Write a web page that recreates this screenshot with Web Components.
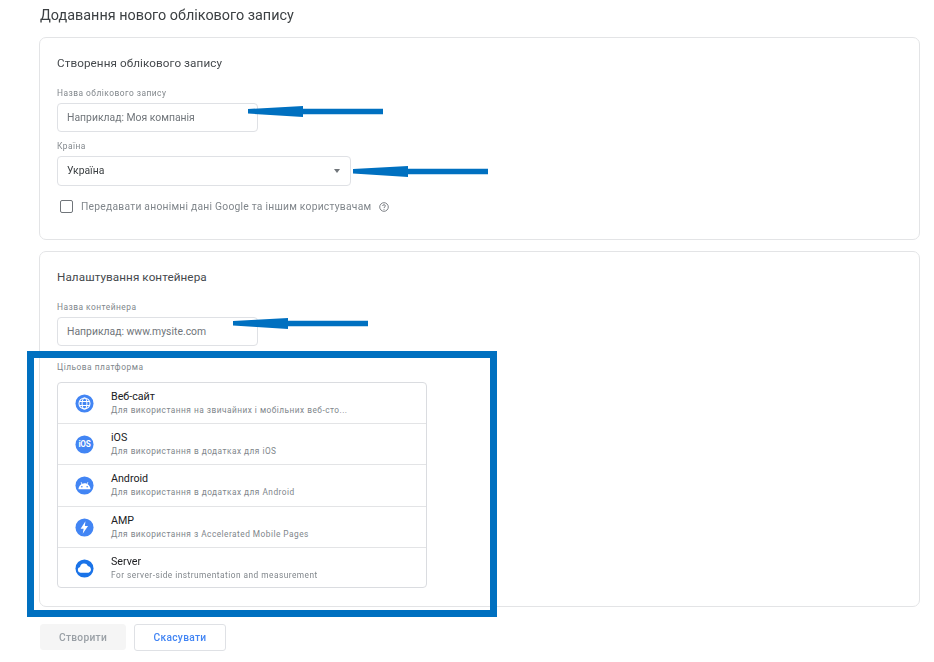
<!DOCTYPE html>
<html lang="uk">
<head>
<meta charset="utf-8">
<title>Додавання нового облікового запису</title>
<style>
html, body { margin: 0; padding: 0; background: #fff; }
body { font-family: Roboto, "Liberation Sans", sans-serif; color: #202124; }
</style>
</head>
<body>
<setup-page>
  <setup-card heading="Створення облікового запису" style="height:203px">
    <text-field label="Назва облікового запису" placeholder="Наприклад: Моя компанія"></text-field>
    <select-field label="Країна" value="Україна"></select-field>
    <share-check>Передавати анонімні дані Google та іншим користувачам</share-check>
  </setup-card>
  <setup-card heading="Налаштування контейнера" style="height:356px">
    <text-field label="Назва контейнера" placeholder="Наприклад: www.mysite.com"></text-field>
    <platform-list label="Цільова платформа">
      <platform-row icon="web" name="Веб-сайт" hint="Для використання на звичайних і мобільних веб-сто..."></platform-row>
      <platform-row icon="ios" name="iOS" hint="Для використання в додатках для iOS"></platform-row>
      <platform-row icon="android" name="Android" hint="Для використання в додатках для Android"></platform-row>
      <platform-row icon="amp" name="AMP" hint="Для використання з Accelerated Mobile Pages"></platform-row>
      <platform-row icon="server" name="Server" hint="For server-side instrumentation and measurement"></platform-row>
    </platform-list>
  </setup-card>
  <div slot="actions" style="display:flex;align-items:flex-start;gap:8px">
    <action-button disabled>Створити</action-button>
    <action-button>Скасувати</action-button>
  </div>
</setup-page>

<script>
const ICONS = {
  web: `<circle cx="10" cy="10" r="9.5" fill="#4285f4"/>
    <g fill="none" stroke="#fff" stroke-width="1.1">
      <circle cx="10" cy="10" r="5.8"/>
      <ellipse cx="10" cy="10" rx="2.5" ry="5.8"/>
      <path d="M4.6 8h10.8M4.6 12h10.8"/>
    </g>`,
  ios: `<circle cx="10" cy="10" r="9.5" fill="#4285f4"/>
    <text x="10" y="13" text-anchor="middle" font-family="Roboto, sans-serif" font-size="8.6" font-weight="700" fill="#fff" letter-spacing="-.2">iOS</text>`,
  android: `<circle cx="10" cy="10" r="9.5" fill="#4285f4"/>
    <path fill="#fff" d="M3.6 14c.2-2.5 1.4-4.5 3.3-5.6L5.9 6.7l.7-.4 1.05 1.8A6.4 6.4 0 0 1 10 7.7c.84 0 1.63.14 2.35.4l1.05-1.8.7.4-1 1.7c1.9 1.1 3.1 3.1 3.3 5.6z"/>
    <circle cx="7.2" cy="11.3" r=".85" fill="#4285f4"/><circle cx="12.8" cy="11.3" r=".85" fill="#4285f4"/>`,
  amp: `<circle cx="10" cy="10" r="9.5" fill="#4285f4"/>
    <path fill="#fff" d="M11 3.4 5.9 11.2h3.2l-1 5.4 5.6-8.2h-3.3z"/>`,
  server: `<circle cx="10" cy="10" r="9.5" fill="#1a73e8"/>
    <path fill="#fff" d="M5.8 14.4a3.1 3.1 0 0 1-.5-6.1 4.4 4.4 0 0 1 8.3-.9 3.6 3.6 0 0 1 .7 7z"/>`
};

class SetupPage extends HTMLElement {
  constructor() {
    super();
    this.attachShadow({ mode: 'open' }).innerHTML = `
    <style>
      :host { display: block; position: relative; width: 934px; height: 662px; box-sizing: border-box; padding: 0 14px 0 39px; overflow: hidden; filter: blur(.35px); }
      h1 { margin: 0; padding: 6px 0 0 1px; height: 37px; box-sizing: border-box; font-size: 14.4px; line-height: 19px; font-weight: 400; color: #3c4043; }
      .cards { display: flex; flex-direction: column; gap: 11px; }
      .actions { padding: 17px 0 0 1px; }
      annotation-arrow.a1 { left: 248px; top: 106px; }
      annotation-arrow.a2 { left: 353px; top: 166px; }
      annotation-arrow.a3 { left: 233px; top: 318px; }
      annotation-frame { left: 27px; top: 351px; }
    </style>
    <h1>Додавання нового облікового запису</h1>
    <div class="cards"><slot></slot></div>
    <div class="actions"><slot name="actions"></slot></div>
    <annotation-arrow class="a1"></annotation-arrow>
    <annotation-arrow class="a2"></annotation-arrow>
    <annotation-arrow class="a3"></annotation-arrow>
    <annotation-frame></annotation-frame>`;
  }
}

class SetupCard extends HTMLElement {
  constructor() {
    super();
    this.attachShadow({ mode: 'open' });
  }
  connectedCallback() {
    this.shadowRoot.innerHTML = `
    <style>
      :host { display: block; box-sizing: border-box; border: 1px solid #e3e4e6; border-radius: 7px; padding: 17px 17px 0; background: #fff; }
      h2 { margin: 0 0 17px; font-size: 11.7px; line-height: 16px; font-weight: 400; color: #45494d; letter-spacing: .08px; }
    </style>
    <h2>${this.getAttribute('heading')}</h2>
    <slot></slot>`;
  }
}

const FIELD_CSS = `
  .label { font-size: 8.4px; line-height: 11px; letter-spacing: .48px; color: #80868b; margin-bottom: 4px; }
  .box { box-sizing: border-box; border: 1px solid #dfe1e5; border-radius: 4px; background: #fff; display: flex; align-items: center; padding: 0 9px; font-size: 10.4px; }
`;

class TextField extends HTMLElement {
  constructor() {
    super();
    this.attachShadow({ mode: 'open' });
  }
  connectedCallback() {
    this.shadowRoot.innerHTML = `
    <style>
      :host { display: block; margin-bottom: 9px; }
      ${FIELD_CSS}
      .box { width: 201px; height: 29px; color: #70757a; }
    </style>
    <div class="label">${this.getAttribute('label')}</div>
    <div class="box">${this.getAttribute('placeholder')}</div>`;
  }
}

class SelectField extends HTMLElement {
  constructor() {
    super();
    this.attachShadow({ mode: 'open' });
  }
  connectedCallback() {
    this.shadowRoot.innerHTML = `
    <style>
      :host { display: block; }
      ${FIELD_CSS}
      .box { width: 294px; height: 30px; color: #3c4043; justify-content: space-between; }
      .box span:first-child { margin-top: -1px; }
      .caret { width: 0; height: 0; border: 3.5px solid transparent; border-top: 4px solid #70757a; border-bottom: 0; margin-right: 1px; }
    </style>
    <div class="label">${this.getAttribute('label')}</div>
    <div class="box"><span>${this.getAttribute('value')}</span><span class="caret"></span></div>`;
  }
}

class ShareCheck extends HTMLElement {
  constructor() {
    super();
    this.attachShadow({ mode: 'open' }).innerHTML = `
    <style>
      :host { display: flex; align-items: center; padding: 14px 0 0 3px; font-size: 10.3px; letter-spacing: .24px; color: #80868b; }
      .box { box-sizing: border-box; width: 13px; height: 13px; border: 1.2px solid #70757a; border-radius: 2px; margin-right: 8px; }
      svg { margin-left: 8px; }
    </style>
    <span class="box"></span><slot></slot>
    <svg width="10" height="10" viewBox="0 0 10 10" fill="none">
      <circle cx="5" cy="5" r="4.3" stroke="#70757a" stroke-width=".9"/>
      <path d="M3.6 4c.1-.9.7-1.3 1.4-1.3.8 0 1.4.5 1.4 1.2 0 1-1.4 1-1.4 2.1" stroke="#70757a" stroke-width=".9"/>
      <circle cx="5" cy="7.3" r=".55" fill="#70757a"/>
    </svg>`;
  }
}

class PlatformList extends HTMLElement {
  constructor() {
    super();
    this.attachShadow({ mode: 'open' });
  }
  connectedCallback() {
    this.shadowRoot.innerHTML = `
    <style>
      :host { display: block; padding-top: 7px; }
      .label { font-size: 8.4px; line-height: 11px; letter-spacing: .5px; color: #80868b; margin-bottom: 9px; }
      .list { box-sizing: border-box; width: 370px; height: 206px; border: 1px solid #dadce0; border-radius: 4px; display: grid; grid-template-rows: 41px 41px 42px 41px 1fr; }
      ::slotted(platform-row:not(:last-child)) { border-bottom: 1px solid #e3e4e6; }
    </style>
    <div class="label">${this.getAttribute('label')}</div>
    <div class="list"><slot></slot></div>`;
  }
}

class PlatformRow extends HTMLElement {
  constructor() {
    super();
    this.attachShadow({ mode: 'open' });
  }
  connectedCallback() {
    this.shadowRoot.innerHTML = `
    <style>
      :host { display: flex; align-items: flex-start; box-sizing: border-box; padding-left: 17px; }
      svg { width: 19px; height: 19px; flex: none; margin: 10.5px 17px 0 0; }
      .text { padding-top: 6.5px; }
      .name { font-size: 10.7px; line-height: 13px; color: #202124; }
      .hint { font-size: 8.3px; line-height: 12px; letter-spacing: .48px; color: #80868b; margin-top: 1px; }
    </style>
    <svg viewBox="0 0 20 20">${ICONS[this.getAttribute('icon')]}</svg>
    <div class="text">
      <div class="name">${this.getAttribute('name')}</div>
      <div class="hint">${this.getAttribute('hint')}</div>
    </div>`;
  }
}

class ActionButton extends HTMLElement {
  constructor() {
    super();
    this.attachShadow({ mode: 'open' }).innerHTML = `
    <style>
      :host { display: flex; align-items: center; justify-content: center; box-sizing: border-box; width: 92px; height: 27px; border: 1px solid #dfe1e5; border-radius: 3px; font-size: 10.2px; font-weight: 500; letter-spacing: .3px; color: #4285f4; background: #fff; }
      :host([disabled]) { width: 86px; height: 26px; border-color: #f5f5f5; background: #f5f5f5; color: #9aa0a6; }
    </style>
    <slot></slot>`;
  }
}

class AnnotationArrow extends HTMLElement {
  constructor() {
    super();
    this.attachShadow({ mode: 'open' }).innerHTML = `
    <style>:host { display: block; position: absolute; width: 135px; height: 11px; } svg { display: block; }</style>
    <svg width="135" height="11" viewBox="0 0 135 11"><path fill="#0070c0" d="M0 3 55 0v2.7h80v5.5H55V11L0 7.5z"/></svg>`;
  }
}

class AnnotationFrame extends HTMLElement {
  constructor() {
    super();
    this.attachShadow({ mode: 'open' }).innerHTML = `
    <style>:host { display: block; position: absolute; box-sizing: border-box; width: 470px; height: 266px; border: 7px solid #0070c0; pointer-events: none; }</style>`;
  }
}

customElements.define('setup-page', SetupPage);
customElements.define('setup-card', SetupCard);
customElements.define('text-field', TextField);
customElements.define('select-field', SelectField);
customElements.define('share-check', ShareCheck);
customElements.define('platform-list', PlatformList);
customElements.define('platform-row', PlatformRow);
customElements.define('action-button', ActionButton);
customElements.define('annotation-arrow', AnnotationArrow);
customElements.define('annotation-frame', AnnotationFrame);
</script>
</body>
</html>
